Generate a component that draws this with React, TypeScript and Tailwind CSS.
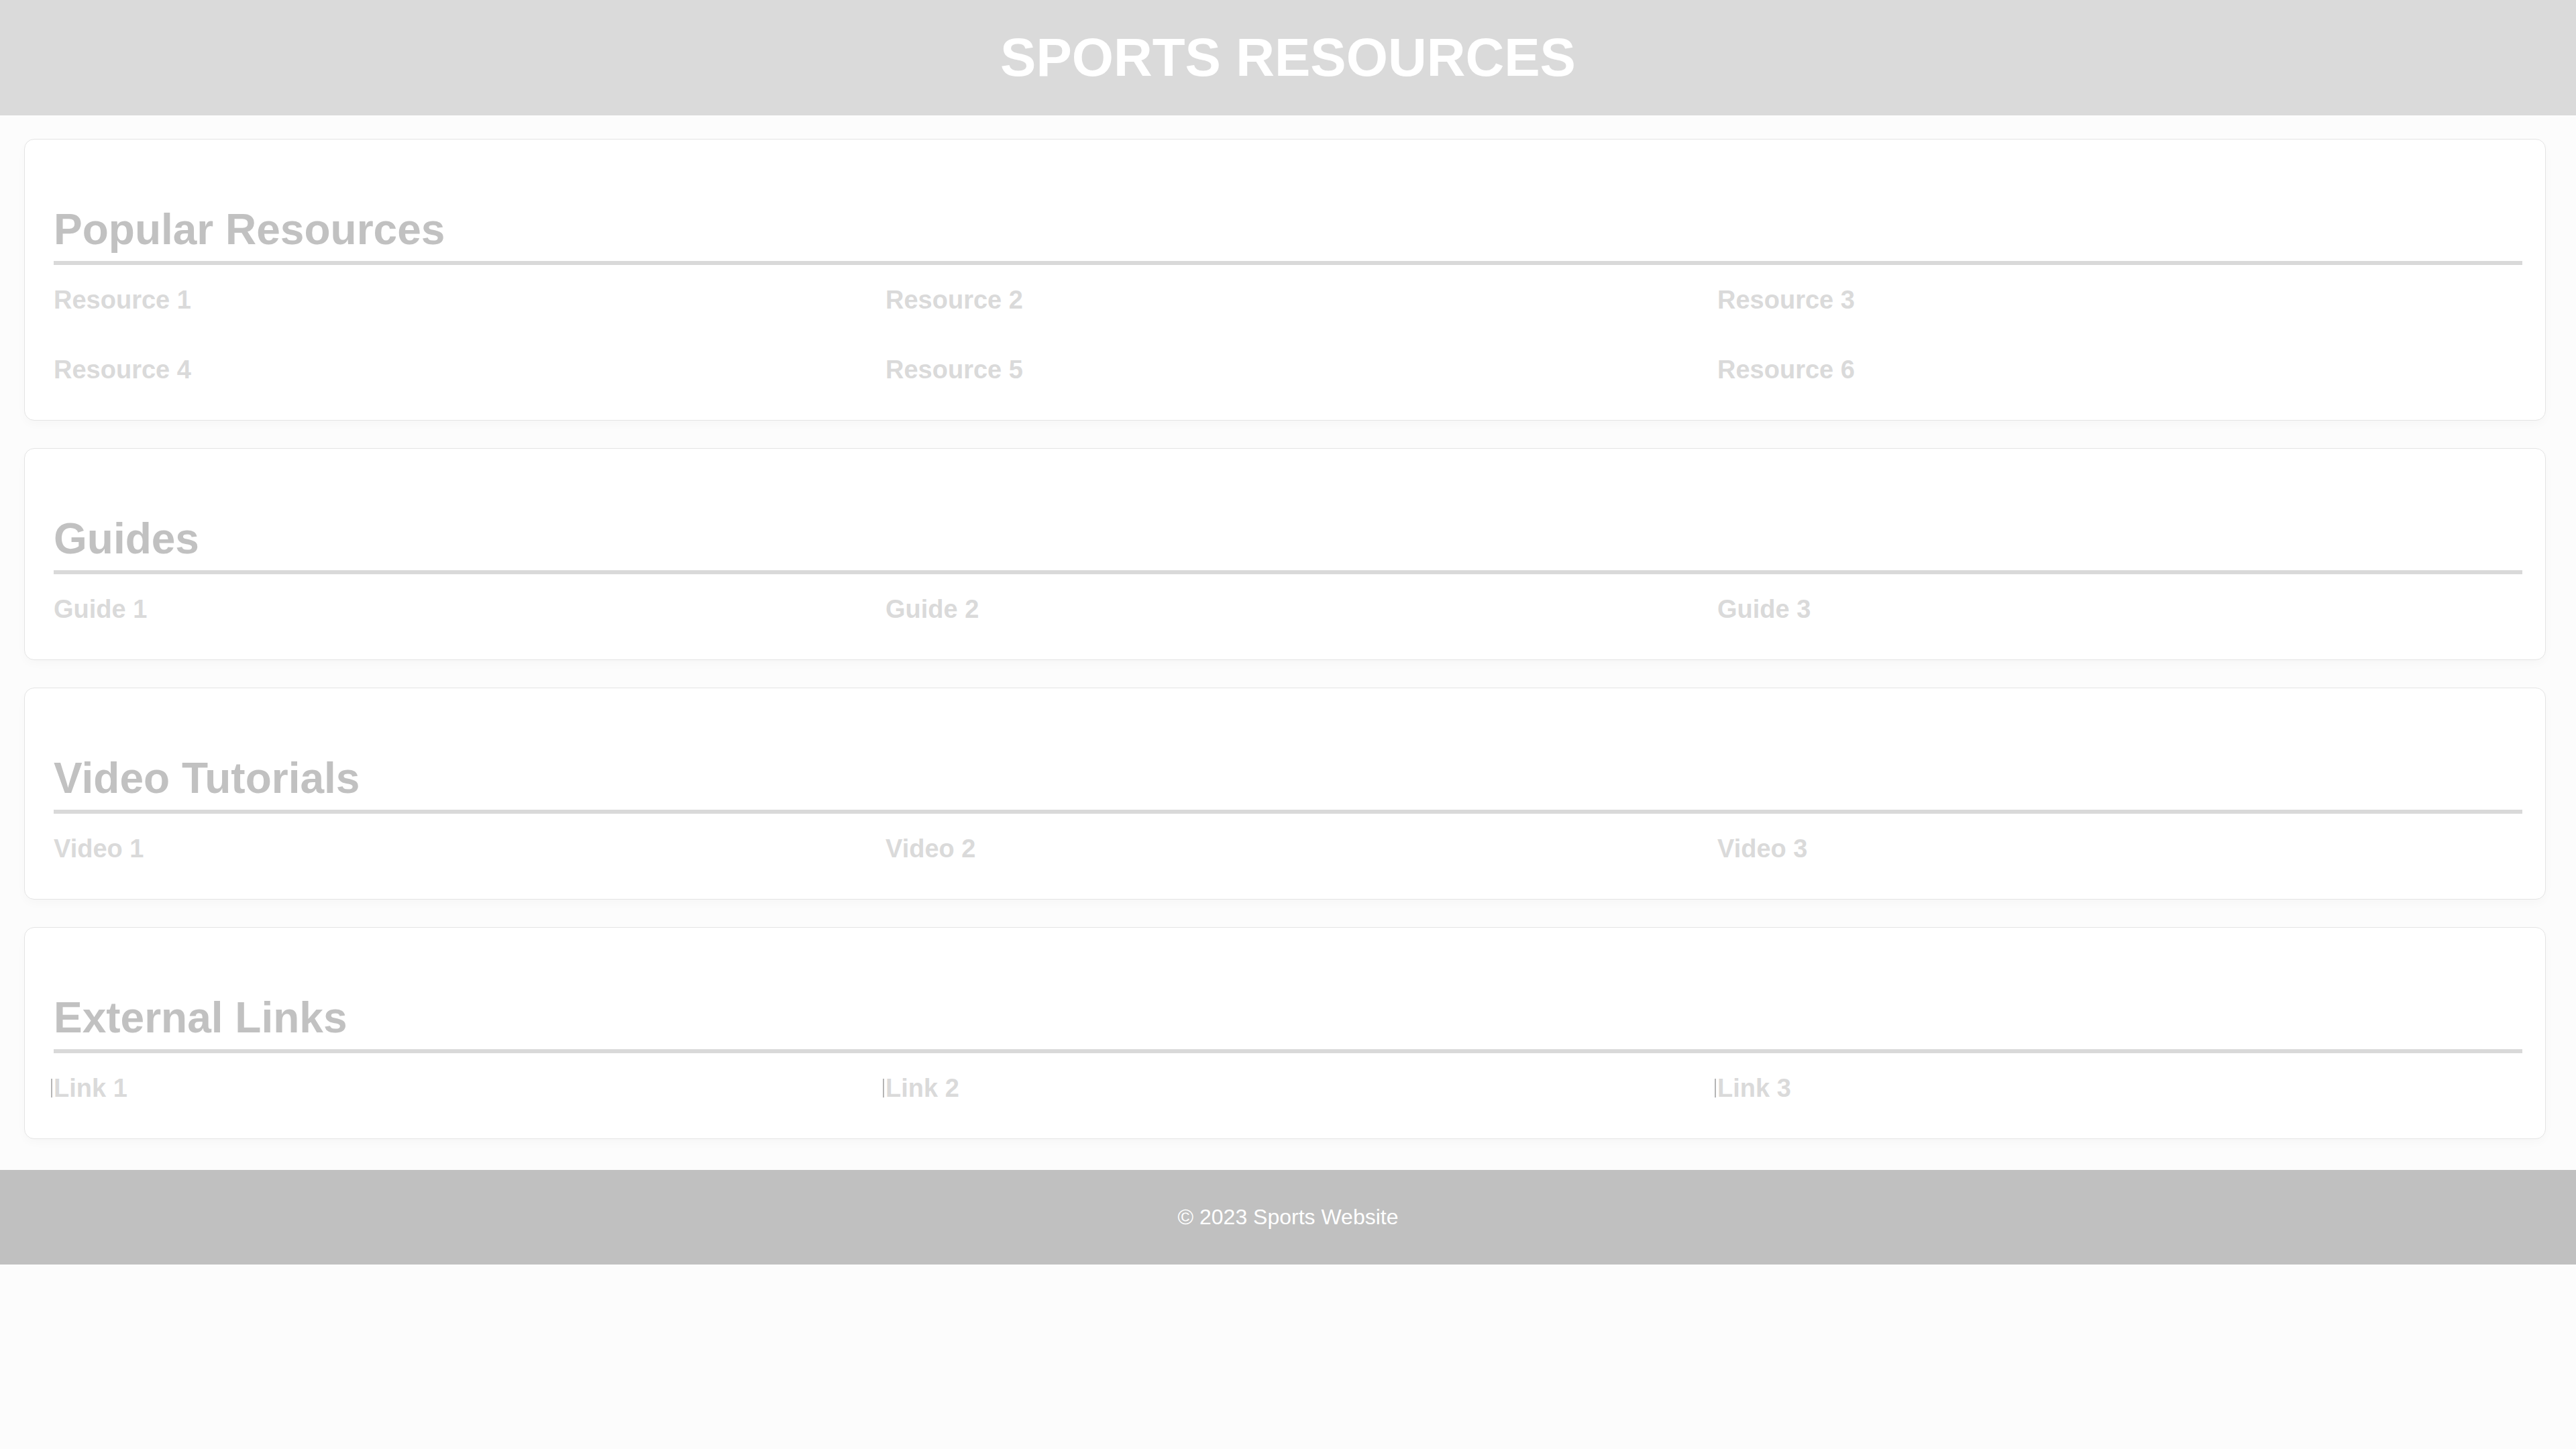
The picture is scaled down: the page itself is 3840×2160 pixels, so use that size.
import React from "react";

type Section = { title: string; items: string[]; link?: boolean };

const sections: Section[] = [
  {
    title: "Popular Resources",
    items: ["Resource 1", "Resource 2", "Resource 3", "Resource 4", "Resource 5", "Resource 6"],
  },
  { title: "Guides", items: ["Guide 1", "Guide 2", "Guide 3"] },
  { title: "Video Tutorials", items: ["Video 1", "Video 2", "Video 3"] },
  { title: "External Links", items: ["Link 1", "Link 2", "Link 3"], link: true },
];

export default function App() {
  return (
    <div
      className="min-h-screen bg-[#fcfcfc]"
      style={{ fontFamily: '"Liberation Sans", Arial, sans-serif' }}
    >
      <header className="bg-[#dadada] py-[40px]">
        <h1 className="text-center text-[80px] leading-[92px] font-bold text-white">
          SPORTS RESOURCES
        </h1>
      </header>
      <main className="flex flex-col gap-[41px] pt-[35px] pb-[46px]">
        {sections.map((s) => (
          <section
            key={s.title}
            className="ml-[36px] mr-[45px] rounded-[15px] border border-[#e4e4e4] bg-white pl-[43px] pr-[34px] pt-[97px] pb-[38px] shadow-[0_6px_14px_rgba(0,0,0,0.025)]"
          >
            <h2 className="mb-[16px] border-b-[6px] border-[#d9d9d9] pb-[10px] text-[64px] leading-[74px] font-bold text-[#c1c1c1]">
              {s.title}
            </h2>
            <div className="grid grid-cols-3 gap-x-[40px] gap-y-[31px]">
              {s.items.map((it) => (
                <div
                  key={it}
                  className="py-[15px] text-[38px] leading-[43px] font-bold text-[#dadada]"
                >
                  {s.link ? (
                    <span className="relative">
                      <span className="absolute left-[-4px] top-[7px] h-[28px] w-[2px] bg-[#b5b5b5]" />
                      {it}
                    </span>
                  ) : (
                    it
                  )}
                </div>
              ))}
            </div>
          </section>
        ))}
      </main>
      <footer className="bg-[#c0c0c0] py-[52px] text-center text-[32px] leading-[37px] text-white">
        © 2023 Sports Website
      </footer>
    </div>
  );
}
